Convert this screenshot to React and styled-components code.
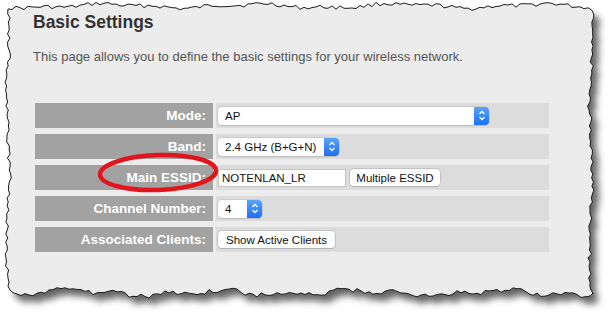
import React from "react";
import styled, { createGlobalStyle } from "styled-components";

const GlobalStyle = createGlobalStyle`
  html, body {
    margin: 0;
    padding: 0;
    background: #ffffff;
  }
  body {
    font-family: "Liberation Sans", Arial, sans-serif;
  }
`;

// torn paper edge, deterministic jitter
const seeded = (seed) => {
  let s = seed;
  return () => {
    s = (s * 9301 + 49297) % 233280;
    return s / 233280;
  };
};

const buildEdge = () => {
  const rnd = seeded(17);
  const pts = [];
  const jag = (a) => (rnd() - 0.5) * a;
  const wave = (t, a) => Math.sin(t / 23) * a + Math.sin(t / 9) * a * 0.5;
  for (let x = 8; x <= 590; x += 4) pts.push([x, 6 + jag(4) + wave(x, 1.8)]);
  for (let y = 10; y <= 294; y += 4) pts.push([591 + jag(3.5) + wave(y, 1.2), y]);
  for (let x = 593; x >= 10; x -= 4) pts.push([x, 293 + jag(5) + wave(x + 40, 2.2)]);
  for (let y = 290; y >= 10; y -= 4) pts.push([8 + jag(3.5) + wave(y + 11, 1.2), y]);
  return pts.map((p) => p.map((v) => v.toFixed(1)).join(",")).join(" ");
};

const EDGE = buildEdge();

const Page = styled.div`
  position: relative;
  width: 608px;
  height: 316px;
  overflow: hidden;
`;

const PaperArt = styled.svg`
  position: absolute;
  inset: 0;
  z-index: 0;
`;

const Content = styled.div`
  position: relative;
  z-index: 1;
  padding: 12px 0 0 33px;
`;

const Title = styled.h1`
  margin: 0;
  font-size: 17.5px;
  line-height: 20px;
  font-weight: bold;
  color: #333333;
`;

const Intro = styled.p`
  margin: 17px 0 0;
  font-size: 13px;
  line-height: 16px;
  color: #555555;
`;

const Table = styled.div`
  display: grid;
  row-gap: 6px;
  margin: 38px 0 0 2px;
  width: 514px;
`;

const Row = styled.div`
  display: grid;
  grid-template-columns: 178px 333px;
  column-gap: 3px;
  height: 25px;
`;

const Label = styled.div`
  display: flex;
  align-items: center;
  justify-content: flex-end;
  padding-right: 7px;
  background: #a2a2a2;
  color: #ffffff;
  font-size: 13.5px;
  font-weight: bold;
`;

const Value = styled.div`
  display: flex;
  align-items: center;
  gap: 4px;
  padding-left: 2px;
  background: #dcdcdc;
`;

const Select = styled.div`
  display: flex;
  align-items: stretch;
  width: ${(p) => p.$w}px;
  height: 18px;
  background: #ffffff;
  border-radius: 4px;
  box-shadow: 0 0 0 0.5px #b9b9b9, 0 1px 1px rgba(0, 0, 0, 0.12);
  font-size: 11.5px;
  color: #111111;
`;

const SelectText = styled.span`
  flex: 1;
  display: flex;
  align-items: center;
  padding-left: 7px;
`;

const Arrow = styled.span`
  width: 15px;
  display: flex;
  align-items: center;
  justify-content: center;
  border-radius: 0 4px 4px 0;
  background: linear-gradient(#5ba2fb, #1a70f2);
`;

const TextInput = styled.div`
  width: 128px;
  height: 18px;
  display: flex;
  align-items: center;
  padding-left: 3px;
  background: #ffffff;
  border: 1px solid #c4c4c4;
  box-sizing: border-box;
  font-size: 11.5px;
  color: #111111;
`;

const Button = styled.div`
  display: flex;
  align-items: center;
  justify-content: center;
  width: ${(p) => p.$w}px;
  height: 17px;
  background: #ffffff;
  border-radius: 4px;
  box-shadow: 0 0 0 0.5px #a9a9a9, 0 1px 1px rgba(0, 0, 0, 0.15);
  font-size: 11.5px;
  color: #111111;
`;

const Mark = styled.svg`
  position: absolute;
  left: 0;
  top: 0;
  z-index: 2;
  pointer-events: none;
`;

const Chevrons = () => (
  <svg width="8" height="11" viewBox="0 0 8 11">
    <path d="M1.5 4 L4 1.5 L6.5 4 M1.5 7 L4 9.5 L6.5 7" fill="none" stroke="#fff" strokeWidth="1.3" />
  </svg>
);

const Dropdown = ({ w, text }) => (
  <Select $w={w}>
    <SelectText>{text}</SelectText>
    <Arrow>
      <Chevrons />
    </Arrow>
  </Select>
);

export default function App() {
  return (
    <Page>
      <GlobalStyle />
      <PaperArt width="608" height="316" viewBox="0 0 608 316">
        <defs>
          <filter id="blur" x="-10%" y="-10%" width="120%" height="120%">
            <feGaussianBlur stdDeviation="3.5" />
          </filter>
        </defs>
        <polygon points={EDGE} fill="#4a4a4a" opacity="0.85" transform="translate(6,7)" filter="url(#blur)" />
        <polygon points={EDGE} fill="#ececec" stroke="#1e1e1e" strokeWidth="1" />
      </PaperArt>
      <Content>
        <Title>Basic Settings</Title>
        <Intro>This page allows you to define the basic settings for your wireless network.</Intro>
        <Table>
          <Row>
            <Label>Mode:</Label>
            <Value>
              <Dropdown w={271} text="AP" />
            </Value>
          </Row>
          <Row>
            <Label>Band:</Label>
            <Value>
              <Dropdown w={121} text="2.4 GHz (B+G+N)" />
            </Value>
          </Row>
          <Row>
            <Label>Main ESSID:</Label>
            <Value>
              <TextInput>NOTENLAN_LR</TextInput>
              <Button $w={90}>Multiple ESSID</Button>
            </Value>
          </Row>
          <Row>
            <Label>Channel Number:</Label>
            <Value>
              <Dropdown w={44} text="4" />
            </Value>
          </Row>
          <Row>
            <Label>Associated Clients:</Label>
            <Value>
              <Button $w={117}>Show Active Clients</Button>
            </Value>
          </Row>
        </Table>
      </Content>
      <Mark width="608" height="316" viewBox="0 0 608 316">
        <ellipse cx="158" cy="172.5" rx="58" ry="17.5" fill="none" stroke="#e2141c" strokeWidth="4.5" transform="rotate(-2 158 172.5)" />
      </Mark>
    </Page>
  );
}
